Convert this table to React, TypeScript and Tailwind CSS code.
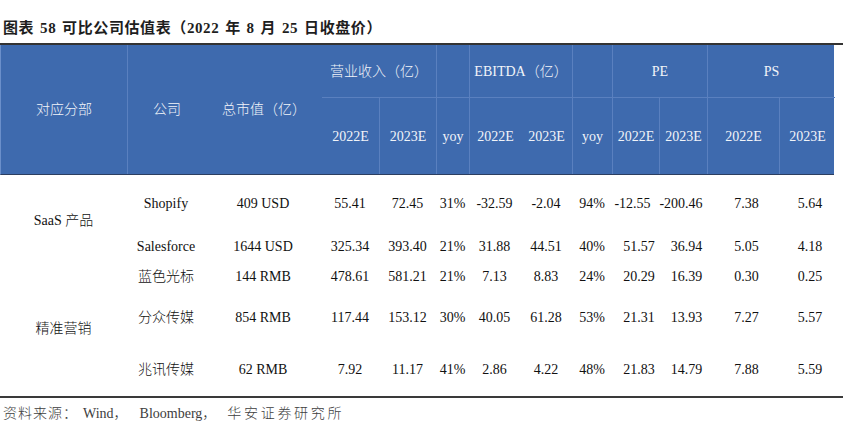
import React from "react";

const GRID =
  "grid grid-cols-[127px_78px_116px_58px_57px_33px_51px_52px_40px_47px_48px_72px_55px]";

const FONT = "font-['Liberation_Serif','Noto_Sans_CJK_SC',serif]";

const rows: string[][] = [
  ["Shopify", "409 USD", "55.41", "72.45", "31%", "-32.59", "-2.04", "94%", "-12.55", "-200.46", "7.38", "5.64"],
  ["Salesforce", "1644 USD", "325.34", "393.40", "21%", "31.88", "44.51", "40%", "51.57", "36.94", "5.05", "4.18"],
  ["蓝色光标", "144 RMB", "478.61", "581.21", "21%", "7.13", "8.83", "24%", "20.29", "16.39", "0.30", "0.25"],
  ["分众传媒", "854 RMB", "117.44", "153.12", "30%", "40.05", "61.28", "53%", "21.31", "13.93", "7.27", "5.57"],
  ["兆讯传媒", "62 RMB", "7.92", "11.17", "41%", "2.86", "4.22", "48%", "21.83", "14.79", "7.88", "5.59"],
];

const ROW_START = ["row-start-1", "row-start-2", "row-start-3", "row-start-4", "row-start-5"];
const COL_START = [
  "col-start-2",
  "col-start-3",
  "col-start-4",
  "col-start-5",
  "col-start-6",
  "col-start-7",
  "col-start-8",
  "col-start-9",
  "col-start-10",
  "col-start-11",
  "col-start-12",
  "col-start-13",
];

function cellPad(r: number, c: number): string {
  if (r === 0 && c === 8) return "pr-[6px]";
  if (r === 0 && c === 9) return "pr-[4px]";
  if (c >= 8) return "pl-[7px]";
  return "";
}

const L = "border-[#5a80bf]";

export default function App() {
  return (
    <div className={`w-[846px] h-[430px] bg-white text-[#111] ${FONT}`}>
      {/* Title */}
      <div className="h-[43px] flex items-center pt-[14px] pl-[3px]">
        <span className="text-[15px] font-bold text-[#1e1e1e] tracking-[0.6px] [word-spacing:1.5px] whitespace-nowrap">
          图表 58 可比公司估值表（2022 年 8 月 25 日收盘价）
        </span>
      </div>
      <div className="w-[843px] h-[2px] bg-[#333]" />

      {/* Header */}
      <div
        className={`${GRID} grid-rows-[53px_76px] w-[834px] bg-[#3e6aae] border-b border-l border-b-[#2c3e60] border-l-[#6b8fca] text-[14px] font-light text-[#f1f4f9]`}
      >
        <div className={`col-start-1 row-start-1 row-span-2 flex items-center justify-center border-r ${L}`}>
          对应分部
        </div>
        <div className="col-start-2 row-start-1 row-span-2 flex items-center justify-center">公司</div>
        <div className="col-start-3 row-start-1 row-span-2 flex items-center justify-center">总市值（亿）</div>

        <div className={`col-start-4 col-span-2 row-start-1 flex items-center justify-center border-b border-r ${L}`}>
          营业收入（亿）
        </div>
        <div className={`col-start-6 row-start-1 border-b border-r ${L}`} />
        <div className={`col-start-7 col-span-2 row-start-1 flex items-center justify-center border-b border-r ${L}`}>
          EBITDA（亿）
        </div>
        <div className={`col-start-9 row-start-1 border-b border-r ${L}`} />
        <div className={`col-start-10 col-span-2 row-start-1 flex items-center justify-center border-b border-r ${L}`}>
          PE
        </div>
        <div className={`col-start-12 col-span-2 row-start-1 flex items-center justify-center border-b ${L}`}>
          PS
        </div>

        <div className={`col-start-4 row-start-2 flex items-center justify-center border-r ${L}`}>2022E</div>
        <div className={`col-start-5 row-start-2 flex items-center justify-center border-r ${L}`}>2023E</div>
        <div className={`col-start-6 row-start-2 flex items-center justify-center border-r ${L}`}>yoy</div>
        <div className="col-start-7 row-start-2 flex items-center justify-center">2022E</div>
        <div className={`col-start-8 row-start-2 flex items-center justify-center border-r ${L}`}>2023E</div>
        <div className={`col-start-9 row-start-2 flex items-center justify-center border-r ${L}`}>yoy</div>
        <div className={`col-start-10 row-start-2 flex items-center justify-center border-r ${L}`}>2022E</div>
        <div className={`col-start-11 row-start-2 flex items-center justify-center border-r ${L}`}>2023E</div>
        <div className={`col-start-12 row-start-2 flex items-center justify-center border-r ${L}`}>2022E</div>
        <div className="col-start-13 row-start-2 flex items-center justify-center">2023E</div>
      </div>

      {/* Body */}
      <div className={`${GRID} grid-rows-[56px_30px_30px_52px_53px] w-[834px] text-[14px] font-light`}>
        <div className="col-start-1 row-start-1 row-span-2 flex items-center justify-center pt-[4px]">SaaS 产品</div>
        <div className="col-start-1 row-start-3 row-span-3 flex items-center justify-center">精准营销</div>
        {rows.map((row, r) =>
          row.map((v, c) => (
            <div
              key={`${r}-${c}`}
              className={`${ROW_START[r]} ${COL_START[c]} flex items-center justify-center whitespace-nowrap ${cellPad(r, c)}`}
            >
              {v}
            </div>
          ))
        )}
      </div>
      <div className="w-[843px] h-[2px] bg-[#3a3a3a]" />

      {/* Footer */}
      <div className="h-[30px] flex items-center pl-[3px] text-[14px] font-light text-[#3d3d3d] whitespace-nowrap">
        <span className="tracking-[1px]">资料来源：</span>
        <span className="ml-[5px]">Wind</span>
        <span>，</span>
        <span className="ml-[12px]">Bloomberg</span>
        <span>，</span>
        <span className="ml-[11px] tracking-[2.7px]">华安证券研究所</span>
      </div>
    </div>
  );
}
